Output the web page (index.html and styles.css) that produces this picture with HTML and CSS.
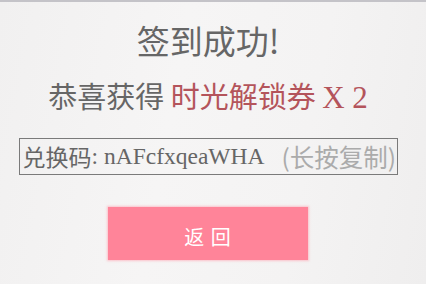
FILE: index.html
```html
<!DOCTYPE html>
<html lang="zh">
<head>
<meta charset="utf-8">
<link rel="stylesheet" href="styles.css">
</head>
<body>
<div class="page">
  <h1 class="title">签到成功!</h1>
  <p class="reward">恭喜获得 <span class="prize">时光解锁券 <span class="serif times">X 2</span></span></p>
  <div class="code-box"><span class="label">兑换码</span><span class="serif code">: nAFcfxqeaWHA</span><span class="hint">(长按复制)</span></div>
  <button class="back">返 回</button>
</div>
</body>
</html>
```
FILE: styles.css
```css
html, body {
  margin: 0;
  padding: 0;
}
body {
  width: 426px;
  height: 284px;
  overflow: hidden;
  background: linear-gradient(100deg, #f1f0f0 0%, #f6f5f5 40%, #f4f3f3 70%, #efeeee 100%);
  font-family: "Noto Sans CJK SC", "Noto Sans", sans-serif;
}
.page {
  box-sizing: border-box;
  height: 284px;
  border-top: 2px solid #c4c3c8;
  padding-right: 10px;
  display: flex;
  flex-direction: column;
  align-items: center;
}
.title {
  margin: 22px 0 0;
  font-size: 33px;
  line-height: 33px;
  font-weight: 400;
  color: #666;
}
.reward {
  margin: 24px 0 0;
  font-size: 29px;
  line-height: 29px;
  color: #666;
}
.prize {
  color: #b4545b;
}
.serif {
  font-family: "Liberation Serif", serif;
}
.times {
  font-size: 31px;
}
.code-box {
  box-sizing: border-box;
  margin-top: 26px;
  width: 379px;
  height: 37px;
  border: 1px solid #7a7a7a;
  display: flex;
  align-items: center;
  padding-left: 3px;
  font-size: 23px;
  line-height: 23px;
  color: #666;
  white-space: nowrap;
}
.code {
  font-size: 23.5px;
}
.hint {
  margin-left: 17px;
  font-size: 24.5px;
  color: #ababab;
}
.back {
  margin-top: 32px;
  width: 200px;
  height: 53px;
  border: 0;
  background: #ff8499;
  box-shadow: 0 0 2px 1px rgba(255, 160, 175, 0.6);
  color: #fff;
  font-family: "Noto Sans CJK SC", sans-serif;
  font-size: 20px;
  letter-spacing: 1px;
  padding: 5px 0 0;
}
```
